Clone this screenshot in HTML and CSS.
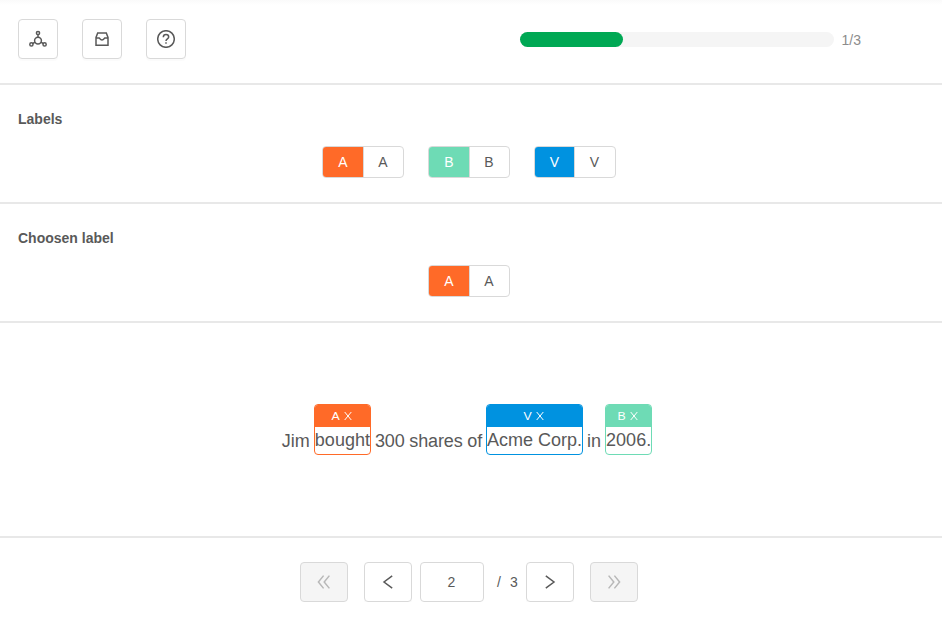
FILE: index.html
```html
<!DOCTYPE html>
<html lang="en">
<head>
<meta charset="utf-8">
<title>Labels</title>
<link rel="stylesheet" href="styles.css">
</head>
<body>
<header class="top">
  <div class="tools">
    <button class="btn tool"><svg width="18" height="18" viewBox="0 0 18 18"><circle cx="9" cy="10.6" r="3.4"/><circle cx="9" cy="3" r="1.6"/><circle cx="2.4" cy="14.4" r="1.6"/><circle cx="15.6" cy="14.4" r="1.6"/><path d="M9 4.6v2.6M3.8 13.5l2.3-1.3M14.2 13.5l-2.3-1.3"/></svg></button>
    <button class="btn tool"><svg width="18" height="18" viewBox="0 0 18 18"><path d="M3 15.2V7.4l1.7-4.5h8.6l1.7 4.5v7.8zM3 8h3.3c.5 0 .8 2 2.7 2s2.2-2 2.7-2H15"/></svg></button>
    <button class="btn tool"><svg width="18" height="18" viewBox="0 0 18 18"><circle cx="9" cy="9" r="8.3"/><path d="M6.3 7.2C6.3 5.5 7.4 4.6 9 4.6s2.7.9 2.7 2.4c0 2-2.7 1.8-2.7 4M9 12.3v1.5"/></svg></button>
  </div>
  <div class="progress">
    <div class="track"><div class="fill"></div></div>
    <span>1/3</span>
  </div>
</header>
<section class="group">
  <h2>Labels</h2>
  <div class="labels">
    <div class="label"><b class="orange">A</b><span>A</span></div>
    <div class="label"><b class="green">B</b><span>B</span></div>
    <div class="label narrow"><b class="blue">V</b><span>V</span></div>
  </div>
</section>
<section class="group">
  <h2>Choosen label</h2>
  <div class="labels">
    <div class="label"><b class="orange">A</b><span>A</span></div>
  </div>
</section>
<main class="sentence">
  <span class="word">Jim</span>
  <span class="mark orange"><span class="tag"><span class="key">A</span><svg width="8" height="8" viewBox="0 0 8 8"><path d="M.7 0l6.6 8M7.3 0L.7 8"/></svg></span><span class="text">bought</span></span>
  <span class="word tight">300 shares of</span>
  <span class="mark blue"><span class="tag"><span class="key">V</span><svg width="8" height="8" viewBox="0 0 8 8"><path d="M.7 0l6.6 8M7.3 0L.7 8"/></svg></span><span class="text">Acme Corp.</span></span>
  <span class="word">in</span>
  <span class="mark green"><span class="tag"><span class="key">B</span><svg width="8" height="8" viewBox="0 0 8 8"><path d="M.7 0l6.6 8M7.3 0L.7 8"/></svg></span><span class="text">2006.</span></span>
</main>
<footer class="pager">
  <button class="btn disabled first"><svg width="14" height="14" viewBox="0 0 14 14"><path d="M6.6.6L1.4 7l5.2 6.4M12.4.6L7.2 7l5.2 6.4"/></svg></button>
  <button class="btn prev"><svg width="14" height="14" viewBox="0 0 14 14"><path d="M11.2.8L3 7l8.2 6.2"/></svg></button>
  <div class="page">2</div>
  <span class="slash">/</span><span class="total">3</span>
  <button class="btn next"><svg width="14" height="14" viewBox="0 0 14 14"><path d="M2.8.8L11 7l-8.2 6.2"/></svg></button>
  <button class="btn disabled"><svg width="14" height="14" viewBox="0 0 14 14"><path d="M1.6.6L6.8 7l-5.2 6.4M7.4.6L12.6 7l-5.2 6.4"/></svg></button>
</footer>
</body>
</html>
```
FILE: styles.css
```css
* { box-sizing: border-box; }
body {
  margin: 0;
  background: #fff;
  color: #595959;
  font: 14px/22px "Liberation Sans", Arial, sans-serif;
}
svg { display: block; fill: none; stroke: currentColor; stroke-width: 1.5; }
.btn {
  display: flex;
  align-items: center;
  justify-content: center;
  width: 48px;
  height: 40px;
  padding: 0;
  border: 1px solid #d9d9d9;
  border-radius: 4px;
  background: #fff;
  color: #595959;
  box-shadow: 0 2px 0 rgba(0, 0, 0, .016);
}
.disabled { background: #f5f5f5; color: #b8b8b8; box-shadow: none; }
.top {
  display: flex;
  justify-content: space-between;
  height: 85px;
  padding: 19px 81px 0 18px;
  border-bottom: 2px solid #e8e8e8;
  background: linear-gradient(#fafafa, #fff 5px);
}
.tools { display: flex; gap: 24px; }
.tool { width: 40px; }
.progress { display: flex; align-items: center; gap: 8px; height: 41px; color: #8c8c8c; }
.track { width: 314px; height: 15px; border-radius: 8px; background: #f5f5f5; }
.fill { width: 103px; height: 15px; border-radius: 8px; background: #00a854; }
.group { height: 119px; padding: 23px 22px 0 18px; border-bottom: 2px solid #e8e8e8; }
h2 { margin: 0 0 16px; font-size: 14px; line-height: 22px; }
.labels { display: flex; justify-content: center; gap: 24px; }
.label {
  display: flex;
  width: 82px;
  height: 32px;
  border: 1px solid #d9d9d9;
  border-radius: 4px;
  overflow: hidden;
  line-height: 30px;
  text-align: center;
}
.label b {
  width: 41px;
  border-right: 1px solid #d9d9d9;
  background: var(--tone);
  color: #fff;
  font-weight: 400;
}
.narrow b { width: 40px; }
.label span { flex: 1; padding-right: 1px; }
.orange { --tone: #ff6a28; }
.green { --tone: #6edbb5; }
.blue { --tone: #0092e0; }
.sentence {
  display: flex;
  justify-content: center;
  gap: 4px;
  height: 215px;
  padding: 81px 8px 0 0;
  border-bottom: 2px solid #e8e8e8;
  font-size: 18px;
}
.word { padding-top: 26px; line-height: 22px; white-space: nowrap; }
.tight { letter-spacing: -.15px; }
.mark { height: 51px; border: 1px solid var(--tone); border-radius: 4px; overflow: hidden; }
.tag {
  display: flex;
  align-items: center;
  justify-content: center;
  gap: 5px;
  height: 22px;
  padding-right: 1px;
  background: var(--tone);
  color: #fff;
  font-size: 11px;
  line-height: 20px;
}
.key { transform: scaleX(1.12); }
.tag svg { stroke-width: 1; margin-top: -1px; }
.text { display: block; line-height: 26px; white-space: nowrap; }
.pager { display: flex; align-items: center; padding: 24px 0 0 300px; line-height: 40px; }
.first { margin-right: 16px; }
.prev { margin-right: 8px; }
.page {
  width: 64px;
  height: 40px;
  padding-right: 1px;
  border: 1px solid #d9d9d9;
  border-radius: 4px;
  line-height: 38px;
  text-align: center;
}
.slash { margin: 0 9px 0 13px; }
.total { margin-right: 8px; }
.next { margin-right: 16px; }
```
